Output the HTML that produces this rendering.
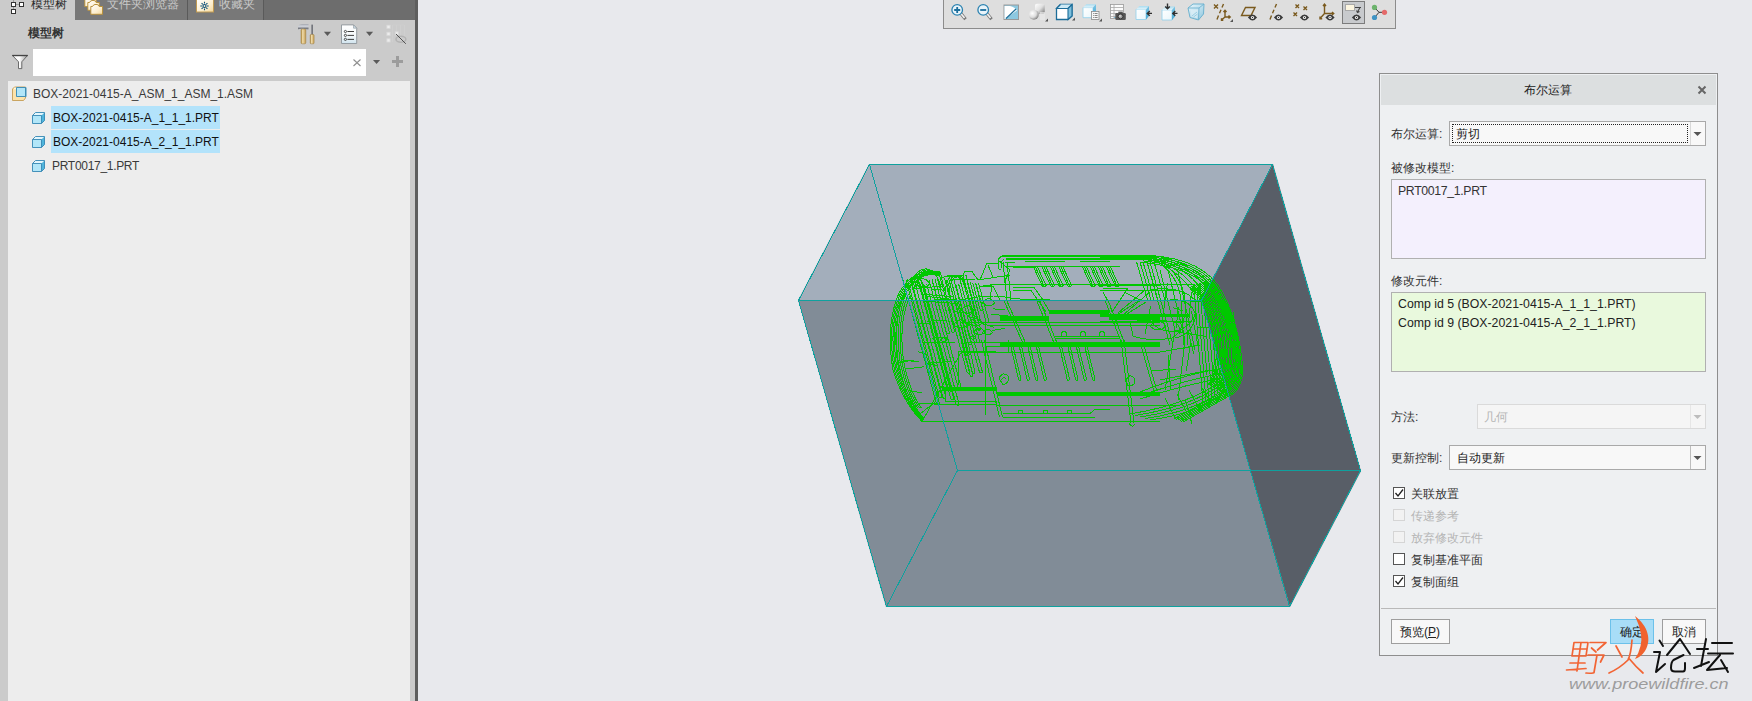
<!DOCTYPE html>
<html><head><meta charset="utf-8">
<style>
*{margin:0;padding:0;box-sizing:border-box}
html,body{width:1752px;height:701px;overflow:hidden;background:#e8e9ed;font-family:"Liberation Sans",sans-serif;font-size:12px;color:#333}
.abs{position:absolute}
.t{position:absolute;white-space:nowrap;line-height:14px}
#panel{left:0;top:0;width:415px;height:701px;background:#cbcbcb}
#tabbar{left:0;top:0;width:415px;height:20px;background:#6d6d6d}
#pbar{left:415px;top:0;width:3px;height:701px;background:#5e5e5e}
#tree{left:8px;top:81px;width:402px;height:620px;background:#ededed}
#search{left:33px;top:49px;width:333px;height:27px;background:#fff}
.hl{position:absolute;background:#b3e3fb}
#toolbar{left:943px;top:-1px;width:453px;height:30px;background:#dedede;border:1px solid #8c8c8c}
#dlg{left:1379px;top:73px;width:339px;height:583px;background:#eef0f2;border:1px solid #8e8e8e}
</style></head>
<body>
<!-- LEFT PANEL -->
<div id="panel" class="abs"></div>
<div id="tabbar" class="abs"></div>
<div class="abs" style="left:0;top:0;width:75px;height:20px;background:#cbcbcb"></div>
<div class="abs" style="left:75px;top:0;width:113px;height:20px;background:#787878;border-right:1px solid #5a5a5a"></div>
<div class="abs" style="left:188px;top:0;width:76px;height:20px;background:#787878;border-right:1px solid #5a5a5a"></div>
<!-- tab icons -->
<svg class="abs" style="left:0;top:0" width="415" height="20">
  <g fill="#fff" stroke="#333" stroke-width="1">
    <rect x="11.5" y="2.5" width="4" height="4"/>
    <rect x="19.5" y="2.5" width="4" height="4"/>
    <rect x="11.5" y="9.5" width="4" height="4"/>
  </g>
  <path d="M16 4.5H19M13.5 7V9M13.5 0V2" stroke="#999" stroke-width="1"/>
  <!-- folders -->
  <defs><linearGradient id="fold" x1="0" y1="0" x2="1" y2="1"><stop offset="0" stop-color="#ffffff"/><stop offset="0.6" stop-color="#fdefcf"/><stop offset="1" stop-color="#f3d79c"/></linearGradient></defs>
  <g stroke="#b8923f" stroke-width="1" fill="url(#fold)">
    <path d="M84.8 -2 H96.2 V6.6 H84.8Z"/>
    <path d="M87.8 2.5 H89.5 Q90.5 0.5 92 0.5 H94 Q95.5 0.5 96.2 2.5 H99.3 V10.3 H87.8Z"/>
    <path d="M90.8 6.5 H92.5 Q93.5 4.5 95 4.5 H97 Q98.5 4.5 99.2 6.5 H102.5 V14.3 H90.8Z"/>
  </g>
  <rect x="196.5" y="-0.5" width="17" height="12.5" fill="url(#fold)" stroke="#c09a52"/>
  <g stroke="#0b4f78" stroke-width="1.1" fill="none"><circle cx="204.5" cy="6" r="1.5"/><path d="M204.5 1.8V3.6M204.5 8.4V10.2M200.3 6H202.1M206.9 6H208.7M201.6 3.1L202.8 4.3M206.2 7.7L207.4 8.9M207.4 3.1L206.2 4.3M202.8 7.7L201.6 8.9"/></g>
</svg>
<div class="t" style="left:31px;top:-3px;font-size:12px;color:#2b2b2b">模型树</div>
<div class="t" style="left:107px;top:-3px;font-size:12px;color:#c9c9c9">文件夹浏览器</div>
<div class="t" style="left:219px;top:-3px;font-size:12px;color:#c9c9c9">收藏夹</div>
<div id="pbar" class="abs"></div>
<div class="t" style="left:28px;top:26px;font-size:12px;font-weight:bold;color:#333">模型树</div>
<!-- header tool icons -->
<svg class="abs" style="left:290px;top:20px" width="125" height="60">
  <defs>
    <linearGradient id="gold" x1="0" y1="0" x2="1" y2="0"><stop offset="0" stop-color="#b08a3e"/><stop offset="0.35" stop-color="#f1dcaa"/><stop offset="1" stop-color="#c19a4f"/></linearGradient>
    <linearGradient id="steel" x1="0" y1="0" x2="0" y2="1"><stop offset="0" stop-color="#9a9ea8"/><stop offset="0.4" stop-color="#d8dbe2"/><stop offset="1" stop-color="#5d6068"/></linearGradient>
    <linearGradient id="docg" x1="0" y1="0" x2="0" y2="1"><stop offset="0" stop-color="#ffffff"/><stop offset="0.6" stop-color="#f4f8fa"/><stop offset="1" stop-color="#cfe3ee"/></linearGradient>
  </defs>
  <path d="M8 6.5 Q9 4.2 12 4.2 H18.5 V9.2 H16.5 Q14.5 8.5 12 8.8 Q9.5 9 8 9.2Z" fill="url(#steel)"/>
  <rect x="11" y="9" width="4.8" height="14.8" rx="1.2" fill="url(#gold)" stroke="#9b7a3a" stroke-width="0.5"/>
  <rect x="21.4" y="4.6" width="1.5" height="10.5" fill="#6a6d75"/>
  <rect x="20.2" y="14.4" width="3.9" height="9.4" rx="1" fill="url(#gold)" stroke="#9b7a3a" stroke-width="0.5"/>
  <path d="M33.9 11.7h7.1l-3.55 4.4z" fill="#5a5a5a"/>
  <path d="M51.5 4.9h12l3.2 3.3v15.3h-15.2z" fill="url(#docg)" stroke="#8d959b" stroke-width="0.9"/>
  <path d="M63.5 4.9v3.3h3.2z" fill="#cfe1ec" stroke="#8d959b" stroke-width="0.6"/>
  <g stroke="#3f3f3f" stroke-width="0.9" fill="none">
    <circle cx="55.4" cy="11.5" r="1.1"/><circle cx="55.4" cy="15.4" r="1.1"/><circle cx="55.4" cy="19.4" r="1.1"/>
    <path d="M57.4 11.5h6.6M57.4 15.4h6.6M57.4 19.4h6.6" stroke-width="1"/>
  </g>
  <path d="M76 11.7h7.1l-3.55 4.4z" fill="#5a5a5a"/>
  <g fill="#ececec" stroke="#d9d9d9" stroke-width="0.8"><rect x="96.9" y="5.2" width="3.2" height="3.2"/><rect x="96.9" y="12.2" width="3.2" height="3.2"/><rect x="96.9" y="18.8" width="3.2" height="3.2"/><rect x="105.3" y="11.8" width="3" height="3"/></g>
  <path d="M102.5 5v17M106.5 5v6M110.5 5v17M114.5 5v17M102.5 5h12" stroke="#d2d2d2" stroke-width="0.6" fill="none"/>
  <ellipse cx="110.9" cy="19.2" rx="4.9" ry="3" fill="none" stroke="#b3b3b3" stroke-width="1.6"/>
  <path d="M106 14 L115.8 23.8" stroke="#444" stroke-width="0.9"/>
</svg>
<div id="search" class="abs"></div>
<svg class="abs" style="left:0;top:45px" width="415" height="36">
  <defs><linearGradient id="fun" x1="0" y1="0" x2="1" y2="0"><stop offset="0" stop-color="#f0f0f0"/><stop offset="0.45" stop-color="#ffffff"/><stop offset="1" stop-color="#9a9a9a"/></linearGradient></defs><path d="M12.3 10.3 H27.7 L21.8 16.8 V23.6 H18.5 V16.8 Z" fill="url(#fun)" stroke="#5c5c5c" stroke-width="0.9"/><path d="M12.3 10.6 H27.7" stroke="#444" stroke-width="1.2"/>
  <path d="M353.5 14.5l7 6.5M360.5 14.5l-7 6.5" stroke="#8e8e8e" stroke-width="1.1"/>
  <path d="M373 15h7.1l-3.55 4z" fill="#5a5a5a"/>
  <path d="M397.5 11v11M392 16.5h11" stroke="#9c9c9c" stroke-width="3"/>
</svg>
<div id="tree" class="abs"></div>
<div class="hl" style="left:51px;top:106px;width:169px;height:23px"></div>
<div class="hl" style="left:51px;top:130px;width:169px;height:23px"></div>
<svg class="abs" style="left:8px;top:81px" width="60" height="100">
  <defs>
    <g id="cube">
      <path d="M0.5 3.5 H9.5 V11.5 H0.5Z" fill="#b2e6f8"/>
      <path d="M0.5 3.5 L3.5 0.5 H12.5 L9.5 3.5Z" fill="#e3f6fd"/>
      <path d="M9.5 3.5 L12.5 0.5 V8.5 L9.5 11.5Z" fill="#4fb5dc"/>
      <path d="M0.5 3.5 L3.5 0.5 H12.5 V8.5 L9.5 11.5 H0.5Z M0.5 3.5 H9.5 V11.5" fill="none" stroke="#3487b3" stroke-width="0.9"/>
    </g>
  </defs>
  <path d="M4.5 8 L6.5 6 H17.5 V17 L15.5 19.5 H4.5Z" fill="#fde3ab" stroke="#c59d55" stroke-width="0.9"/>
  <path d="M6 7.5 H15" stroke="#fff6df" stroke-width="1.5"/>
  <g transform="translate(8,6)">
    <path d="M0.5 0.5 H9.5 V9.5 H0.5Z" fill="#b2e6f8" stroke="#3487b3" stroke-width="0.9"/>
    <path d="M9.5 0.5 H10.5 V9.5 L9.5 10.5Z" fill="#3d8fb8"/>
  </g>
  <use href="#cube" x="24" y="31"/>
  <use href="#cube" x="24" y="55"/>
  <use href="#cube" x="24" y="79"/>
</svg>
<div class="t" style="left:33px;top:87px;color:#3a3a3a">BOX-2021-0415-A_ASM_1_ASM_1.ASM</div>
<div class="t" style="left:53px;top:111px;color:#111">BOX-2021-0415-A_1_1_1.PRT</div>
<div class="t" style="left:53px;top:135px;color:#111">BOX-2021-0415-A_2_1_1.PRT</div>
<div class="t" style="left:52px;top:159px;color:#3a3a3a;letter-spacing:-0.3px">PRT0017_1.PRT</div>
<!-- VIEWPORT -->
<svg class="abs" style="left:0;top:0" width="1752" height="701">
  <!-- box faces -->
  <polygon points="869,164 1273,164 1201,300 798,300" fill="#a3aebb"/>
  <polygon points="798,300 1201,300 1290,607 886,607" fill="#818c97"/>
  <polygon points="1273,164 1361,471 1290,607 1201,300" fill="#585e67"/>
  <g id="wire" fill="none" stroke="#00c800" stroke-width="1" shape-rendering="crispEdges"><path d="M940.0,272.0 Q915.0,266.0 899.0,293.0 Q885.0,325.0 893.0,370.0 Q903.0,402.0 922.0,421.5"/><path d="M940.0,273.0 Q915.8,267.0 900.3,293.8 Q886.4,325.0 894.4,370.0 Q904.3,401.7 922.5,420.7"/><path d="M940.0,273.9 Q916.6,267.9 901.6,294.6 Q887.9,325.0 895.9,370.0 Q905.6,401.4 923.0,419.9"/><path d="M940.0,274.9 Q917.4,268.9 902.8,295.4 Q889.3,325.0 897.3,370.0 Q906.8,401.0 923.4,419.1"/><path d="M940.0,275.8 Q918.2,269.8 904.1,296.2 Q890.8,325.0 898.8,370.0 Q908.1,400.7 923.9,418.3"/><path d="M905.0,290.0 Q893.0,320.0 898.0,360.0 Q904.0,392.0 916.0,408.0"/><path d="M906.8,291.8 Q894.8,320.0 899.8,360.0 Q905.8,392.0 917.8,408.0"/><path d="M908.6,293.6 Q896.6,320.0 901.6,360.0 Q907.6,392.0 919.6,408.0"/><path d="M910.4,295.4 Q898.4,320.0 903.4,360.0 Q909.4,392.0 921.4,408.0"/><path d="M930.0,271.5 L940.0,272.0 L942.0,278.0"/><path d="M942.0,278.0 L949.0,275.0 L963.0,275.0 L965.0,271.5 L972.0,271.5 L978.0,280.0"/><path d="M944.0,276.0 L962.0,277.0"/><path d="M950.0,279.0 L975.0,279.0"/><path d="M910,288 Q915,268 927,269 Q937,271 941,288"/><path d="M912,288 Q917,269 928,270 Q937,271 941,288"/><path d="M914,288 Q919,270 929,271 Q937,271 941,288"/><path d="M916,288 Q921,271 930,272 Q937,271 941,288"/><path d="M945,292 Q947,275 955,275 Q963,276 966,292"/><path d="M947,292 Q949,276 956,276 Q963,276 966,292"/><path d="M949,292 Q951,277 957,277 Q963,276 966,292"/><path d="M902.9,279.6 L936.4,403.5 Q937.9,405.5 939.4,403.5 L905.9,279.6"/><path d="M907.2,279.1 L939.0,396.7 Q940.5,398.7 942.0,396.7 L910.2,279.1"/><path d="M911.0,279.1 L943.0,397.6 Q944.5,399.6 946.0,397.6 L914.0,279.1"/><path d="M916.5,274.9 L947.8,391.1 Q949.3,393.1 950.8,391.1 L919.5,274.9"/><path d="M919.4,282.1 L950.9,398.9 Q952.4,400.9 953.9,398.9 L922.4,282.1"/><path d="M923.6,283.8 L956.1,404.3 Q957.6,406.3 959.1,404.3 L926.6,283.8"/><path d="M929.1,280.2 L958.3,388.1 Q959.8,390.1 961.3,388.1 L932.1,280.2"/><path d="M932.1,279.3 L946.6,333.0 Q948.1,335.0 949.6,333.0 L935.1,279.3"/><path d="M936.8,276.4 L951.7,331.5 Q953.2,333.5 954.7,331.5 L939.8,276.4"/><path d="M941.6,278.4 L966.9,372.1 Q968.4,374.1 969.9,372.1 L944.6,278.4"/><path d="M946.0,280.4 L966.2,355.0 Q967.7,357.0 969.2,355.0 L949.0,280.4"/><path d="M950.6,278.6 L968.3,343.9 Q969.8,345.9 971.3,343.9 L953.6,278.6"/><path d="M955.6,284.0 L979.4,372.0 Q980.9,374.0 982.4,372.0 L958.6,284.0"/><path d="M959.3,277.2 L976.7,341.5 Q978.2,343.5 979.7,341.5 L962.3,277.2"/><path d="M962.8,274.7 L977.5,329.2 Q979.0,331.2 980.5,329.2 L965.8,274.7"/><path d="M967.3,282.5 L977.3,319.7 Q978.8,321.7 980.3,319.7 L970.3,282.5"/><path d="M972.7,282.5 L980.2,310.0 Q981.7,312.0 983.2,310.0 L975.7,282.5"/><path d="M975.5,283.1 L986.0,321.7 Q987.5,323.7 989.0,321.7 L978.5,283.1"/><path d="M955,300 L972,372 Q973.5,375 975,372 L958,300"/><path d="M993.2,308.8 L1005.1,309.9"/><path d="M975.1,301.2 L987.2,299.8"/><path d="M991.8,330.5 L1004.7,328.5"/><path d="M914.1,288.6 L944.0,286.0"/><path d="M955.3,311.8 L970.1,313.7"/><path d="M916.8,323.6 L929.7,323.0"/><path d="M924.2,301.2 L958.4,303.6"/><path d="M932.4,338.1 L947.6,337.2"/><path d="M981.9,323.5 L994.4,327.4"/><path d="M924.2,300.5 L953.5,299.1"/><path d="M931.7,289.4 L943.9,290.1"/><path d="M926.9,321.1 L946.2,320.7"/><path d="M991.3,314.0 L1015.7,317.0"/><path d="M921.5,294.2 L954.2,296.8"/><path d="M927.5,296.4 L955.9,299.9"/><path d="M922.7,342.0 L954.7,342.8"/><path d="M917.8,351.7 L926.5,354.5"/><path d="M909.2,390.8 L921.6,392.7"/><path d="M926.0,364.1 L937.0,365.4"/><path d="M901.2,359.8 L918.7,362.0"/><path d="M926.9,363.2 L950.5,361.4"/><path d="M898.8,362.5 L914.4,359.9"/><path d="M906.3,369.0 L924.0,366.8"/><path d="M915.0,402.9 L939.7,403.9"/><path d="M968.1,316.3 Q971.8,311.1 975.5,316.3 Q971.8,319.3 968.1,316.3"/><path d="M915.1,284.0 Q922.6,273.4 930.2,284.0 Q922.6,290.1 915.1,284.0"/><path d="M969.5,337.9 Q972.6,333.5 975.7,337.9 Q972.6,340.4 969.5,337.9"/><path d="M961.1,310.5 Q967.7,301.2 974.4,310.5 Q967.7,315.8 961.1,310.5"/><path d="M940.5,340.0 Q943.9,335.2 947.3,340.0 Q943.9,342.7 940.5,340.0"/><path d="M953.5,325.0 Q961.0,314.5 968.5,325.0 Q961.0,331.0 953.5,325.0"/><path d="M968.3,323.1 Q975.3,313.4 982.2,323.1 Q975.3,328.7 968.3,323.1"/><path d="M982.2,303.1 Q988.6,294.1 995.1,303.1 Q988.6,308.2 982.2,303.1"/><path d="M982.5,332.7 Q987.6,325.5 992.6,332.7 Q987.6,336.7 982.5,332.7"/><path d="M973.4,332.2 Q979.3,324.0 985.2,332.2 Q979.3,336.9 973.4,332.2"/><path d="M958.0,351.0 L996.0,351.0"/><path d="M958.0,351.0 L958.0,385.0"/><path d="M980.0,280.0 L987.0,263.0 L998.0,263.0"/><path d="M988.0,265.0 L993.0,277.0"/><path d="M978.0,280.0 L1010.0,275.0"/><path d="M983.0,286.0 L992.0,285.0 L990.0,300.0"/><path d="M980.0,286.0 L993.0,286.0 L1000.0,300.0"/><path d="M1002.0,255.5 L1150.0,255.5" stroke-width="2"/><path d="M1006.0,258.7 L1150.0,258.7" stroke-width="2"/><path d="M1002,256 Q998,258 998,262 L998,268 Q999,270 1001,270"/><path d="M1004,259 Q1001,261 1001,264 L1001,268"/><path d="M1005.0,262.0 L1015.0,262.0"/><path d="M1005.0,266.0 L1015.0,266.0"/><path d="M1025.0,261.9 L1065.0,261.9"/><path d="M1080.0,261.9 L1110.0,261.9"/><path d="M1013.0,266.0 L1120.0,266.0"/><path d="M1013.0,267.0 L1035.0,267.0"/><path d="M998.0,260.0 L1010.0,270.0 L1004.0,283.0"/><path d="M1003.0,262.0 L1007.0,300.0"/><path d="M1007.0,262.0 L1011.0,300.0"/><path d="M1033.0,266 L1042.0,285.5 Q1044.0,288 1046.0,285.5 L1037.0,266"/><path d="M1035.0,266.0 L1044.0,286.0"/><path d="M1041.5,266 L1050.5,285.5 Q1052.5,288 1054.5,285.5 L1045.5,266"/><path d="M1043.5,266.0 L1052.5,286.0"/><path d="M1050.0,266 L1059.0,285.5 Q1061.0,288 1063.0,285.5 L1054.0,266"/><path d="M1052.0,266.0 L1061.0,286.0"/><path d="M1058.5,266 L1067.5,285.5 Q1069.5,288 1071.5,285.5 L1062.5,266"/><path d="M1060.5,266.0 L1069.5,286.0"/><path d="M1082.0,266 L1091.0,285.5 Q1093.0,288 1095.0,285.5 L1086.0,266"/><path d="M1084.0,266.0 L1093.0,286.0"/><path d="M1090.0,266 L1099.0,285.5 Q1101.0,288 1103.0,285.5 L1094.0,266"/><path d="M1092.0,266.0 L1101.0,286.0"/><path d="M1098.0,266 L1107.0,285.5 Q1109.0,288 1111.0,285.5 L1102.0,266"/><path d="M1100.0,266.0 L1109.0,286.0"/><path d="M1106.0,266 L1115.0,285.5 Q1117.0,288 1119.0,285.5 L1110.0,266"/><path d="M1108.0,266.0 L1117.0,286.0"/><path d="M990.0,284.2 L1195.0,284.2"/><path d="M1013.0,287.4 L1034.0,287.4 L1043.0,300.0 L1049.0,311.0"/><path d="M1013.0,290.5 L1031.0,290.5 L1040.0,303.0 L1046.0,312.0"/><path d="M1103.0,288.0 L1128.0,288.0"/><path d="M1103.0,292.0 L1110.0,305.0 L1112.0,312.0"/><path d="M1128.0,288.0 L1112.0,312.0"/><path d="M1124.0,292.0 L1140.0,300.0"/><path d="M1049.0,312.0 L1109.0,312.0" stroke-width="4"/><path d="M1000.0,318.0 L1049.0,318.0" stroke-width="5"/><path d="M1109.0,317.0 L1160.0,317.0" stroke-width="5"/><path d="M960.0,322.0 L1160.0,322.0"/><path d="M990.0,325.0 L1160.0,325.0"/><path d="M1055.0,336.0 L1120.0,336.0"/><path d="M1055.0,338.5 L1120.0,338.5"/><path d="M1061.5,336 L1061.5,333 Q1064,329 1066.5,333 L1066.5,336"/><path d="M1080.5,336 L1080.5,333 Q1083,329 1085.5,333 L1085.5,336"/><path d="M1099.5,336 L1099.5,333 Q1102,329 1104.5,333 L1104.5,336"/><path d="M966.0,342.6 L1160.0,342.6"/><path d="M1000.0,344.0 L1160.0,344.0" stroke-width="3"/><path d="M985.0,346.8 L1160.0,346.8"/><path d="M961.0,352.8 L1160.0,352.8"/><path d="M1008.0,340.0 L1008.0,352.0"/><path d="M1003.7,300.0 L1022.8,343.0"/><path d="M1006.5,300.0 L1025.6,343.0"/><path d="M1036.5,300.0 L1054.0,343.0"/><path d="M1039.5,300.0 L1057.0,343.0"/><path d="M1105.0,300.0 L1121.5,343.0"/><path d="M1108.0,300.0 L1124.5,343.0"/><path d="M1109.0,320.0 L1140.0,300.0"/><path d="M1114.0,322.0 L1146.0,302.0"/><path d="M1140,320 Q1160,312 1190,316"/><path d="M960,300 Q990,294 1005,297 Q1025,301 1050,299"/><path d="M1010.0,343 L1018.5,379 Q1019.5,382 1021.0,379 L1012.2,343"/><path d="M1018.5,343 L1027.0,379 Q1028.0,382 1029.5,379 L1020.7,343"/><path d="M1027.0,343 L1035.5,379 Q1036.5,382 1038.0,379 L1029.2,343"/><path d="M1035.5,343 L1044.0,379 Q1045.0,382 1046.5,379 L1037.7,343"/><path d="M1058.6,343 L1067.1,379 Q1068.1,382 1069.6,379 L1060.8,343"/><path d="M1067.0,343 L1075.5,379 Q1076.5,382 1078.0,379 L1069.2,343"/><path d="M1075.5,343 L1084.0,379 Q1085.0,382 1086.5,379 L1077.7,343"/><path d="M1084.0,343 L1092.5,379 Q1093.5,382 1095.0,379 L1086.2,343"/><path d="M961,340 L970,375 Q971.5,378 973,375 L964,340"/><path d="M981.4,340.0 L999.4,417.0"/><path d="M984.4,340.0 L1002.4,417.0"/><path d="M999,378 Q1003,371 1008,376 Q1010,383 1003,385 Z"/><path d="M1001,380 Q1004,376 1006,379"/><path d="M941.6,388.8 L997.0,388.8" stroke-width="4"/><path d="M997.0,393.8 L1160.0,393.8" stroke-width="4"/><path d="M945.0,389.0 L945.0,402.0"/><path d="M945.0,401.6 L997.0,401.6"/><path d="M934.0,404.0 L997.0,404.0"/><path d="M997.0,405.7 L1180.0,405.7"/><path d="M1003.0,413.6 L1090.0,413.6"/><path d="M1018.0,413.6 L1018.0,410.0 L1022.0,410.0 L1022.0,413.6"/><path d="M1043.0,413.6 L1043.0,410.0 L1047.0,410.0 L1047.0,413.6"/><path d="M1067.0,413.6 L1067.0,410.0 L1071.0,410.0 L1071.0,413.6"/><path d="M1003.0,417.8 L1095.0,417.8"/><path d="M1090.0,413.6 L1095.0,409.0 L1110.0,409.0"/><path d="M922.0,421.5 L1160.0,421.5"/><path d="M922.0,421.5 L960.9,352.8"/><path d="M920.0,414.0 L935.0,402.0"/><path d="M1121.0,340.0 L1131.0,423.0"/><path d="M1124.0,340.0 L1134.0,423.0"/><path d="M1126,380 Q1130,372 1135,379 Q1136,386 1128,386 Z"/><path d="M1129,423 Q1132,429 1135,424"/><path d="M1140.0,342.0 L1154.0,391.0"/><path d="M1143.0,342.0 L1157.0,391.0"/><path d="M1150.0,255.5 Q1205.0,259.0 1222.0,292.0 Q1240.0,325.0 1243.0,372.0 Q1240.0,392.0 1229.0,396.0 L1183.0,422.0"/><path d="M1148.3,256.9 Q1203.3,260.7 1220.3,292.5 Q1238.6,325.0 1241.6,372.0 Q1238.8,391.3 1227.6,395.3 L1181.3,421.3"/><path d="M1146.6,258.2 Q1201.6,262.4 1218.6,293.0 Q1237.3,325.0 1240.3,372.0 Q1237.6,390.6 1226.3,394.6 L1179.6,420.6"/><path d="M1144.9,259.6 Q1199.9,264.1 1216.9,293.5 Q1235.9,325.0 1238.9,372.0 Q1236.4,390.0 1224.9,394.0 L1177.9,420.0"/><path d="M1143.2,260.9 Q1198.2,265.8 1215.2,294.0 Q1234.6,325.0 1237.6,372.0 Q1235.2,389.3 1223.6,393.3 L1176.2,419.3"/><path d="M1141.5,262.3 Q1196.5,267.5 1213.5,294.6 Q1233.2,325.0 1236.2,372.0 Q1234.0,388.6 1222.2,392.6 L1174.5,418.6"/><path d="M1209.0,279.0 Q1237.0,310.0 1239.0,350.0 Q1239.0,378.0 1224.0,393.0"/><path d="M1207.7,279.5 Q1235.4,310.0 1237.4,350.0 Q1237.4,378.0 1222.9,392.5"/><path d="M1206.5,280.1 Q1233.8,310.0 1235.8,350.0 Q1235.8,378.0 1221.8,391.9"/><path d="M1205.2,280.6 Q1232.1,310.0 1234.1,350.0 Q1234.1,378.0 1220.8,391.4"/><path d="M1204.0,281.2 Q1230.5,310.0 1232.5,350.0 Q1232.5,378.0 1219.7,390.8"/><path d="M1202.7,281.7 Q1228.9,310.0 1230.9,350.0 Q1230.9,378.0 1218.6,390.3"/><path d="M1201.4,282.2 Q1227.3,310.0 1229.3,350.0 Q1229.3,378.0 1217.5,389.8"/><path d="M1200.2,282.8 Q1225.7,310.0 1227.7,350.0 Q1227.7,378.0 1216.4,389.2"/><path d="M1198.9,283.3 Q1224.0,310.0 1226.0,350.0 Q1226.0,378.0 1215.4,388.7"/><path d="M1197.7,283.9 Q1222.4,310.0 1224.4,350.0 Q1224.4,378.0 1214.3,388.1"/><path d="M1196.4,284.4 Q1220.8,310.0 1222.8,350.0 Q1222.8,378.0 1213.2,387.6"/><path d="M1195.1,284.9 Q1219.2,310.0 1221.2,350.0 Q1221.2,378.0 1212.1,387.1"/><path d="M1193.9,285.5 Q1217.6,310.0 1219.6,350.0 Q1219.6,378.0 1211.0,386.5"/><path d="M1192.6,286.0 Q1215.9,310.0 1217.9,350.0 Q1217.9,378.0 1210.0,386.0"/><path d="M1191.4,286.6 Q1214.3,310.0 1216.3,350.0 Q1216.3,378.0 1208.9,385.4"/><path d="M1190.1,287.1 Q1212.7,310.0 1214.7,350.0 Q1214.7,378.0 1207.8,384.9"/><path d="M1194.0,286.0 L1203.0,404.0"/><path d="M1197.0,288.0 L1206.0,401.8"/><path d="M1200.0,290.0 L1209.0,399.6"/><path d="M1203.0,292.0 L1212.0,397.4"/><path d="M1206.0,294.0 L1215.0,395.2"/><path d="M1209.0,296.0 L1218.0,393.0"/><path d="M1212.0,298.0 L1221.0,390.8"/><path d="M1215.0,300.0 L1224.0,388.6"/><path d="M1218.0,302.0 L1227.0,386.4"/><path d="M1221.0,304.0 L1230.0,384.2"/><path d="M1224.0,306.0 L1233.0,382.0"/><path d="M1227.0,308.0 L1236.0,379.8"/><path d="M1230.0,310.0 L1239.0,377.6"/><path d="M1233.0,312.0 L1242.0,375.4"/><path d="M1150.0,420.0 Q1212.0,412.0 1238.0,378.0"/><path d="M1145.0,418.5 Q1209.5,409.5 1236.0,376.8"/><path d="M1140.0,417.0 Q1207.0,407.0 1234.0,375.5"/><path d="M1135.0,415.5 Q1204.5,404.5 1232.0,374.2"/><path d="M1130.0,414.0 Q1202.0,402.0 1230.0,373.0"/><path d="M1175.0,418.0 L1165.0,398.0"/><path d="M1187.0,413.0 L1177.0,394.0"/><path d="M1199.0,408.0 L1189.0,390.0"/><path d="M1211.0,403.0 L1201.0,386.0"/><path d="M1130,322 Q1150,318 1175,322 Q1185,330 1172,338 Q1150,342 1133,336 Z"/><path d="M985.0,322.0 L985.0,415.0"/><path d="M1140,392 Q1190,372 1235,366.5"/><path d="M1140,396 Q1190,378 1232,372"/><path d="M1140,399 Q1190,383 1230,377"/><path d="M1150,290 Q1180,285 1195,300 Q1200,320 1180,330 Q1160,335 1150,320"/><path d="M1160.0,270.0 L1175.0,330.0 L1165.0,390.0"/><path d="M1168.0,270.0 L1185.0,340.0 L1178.0,400.0"/><path d="M1178.0,272.0 L1195.0,350.0"/><path d="M1160.0,352.0 L1200.0,345.0"/><path d="M1160.0,380.0 L1210.0,370.0"/><path d="M1184.4,316.6 L1179.4,333.6"/><path d="M1185.2,399.1 L1191.9,423.8"/><path d="M1190.4,343.4 L1186.3,371.4"/><path d="M1178.3,306.9 L1176.3,327.6"/><path d="M1188.4,332.1 L1193.6,353.5"/><path d="M1150.6,305.6 L1145.1,333.6"/><path d="M1191.5,311.2 L1198.5,348.5"/><path d="M1168.0,354.9 L1170.7,390.0"/><path d="M1191.5,292.0 L1188.7,321.6"/><path d="M1167.4,283.4 L1162.9,316.2"/><path d="M1197.5,327.7 L1211.7,327.2"/><path d="M1163.8,321.4 L1184.1,322.7"/><path d="M1174.7,331.5 L1205.7,336.4"/><path d="M1172.6,307.5 L1183.4,311.2"/><path d="M1152.1,370.9 L1176.3,369.0"/><path d="M1189.6,301.9 L1203.0,301.5"/><path d="M1100,255.5 L1154.0,255.5 Q1190.0,262.0 1208.0,282.5"/><path d="M1100,256.4 L1152.9,256.4 Q1187.8,264.2 1204.7,285.8"/><path d="M1100,257.3 L1151.8,257.3 Q1185.6,266.4 1201.4,289.1"/><path d="M1100,258.1 L1150.7,258.1 Q1183.4,268.6 1198.1,292.4"/><path d="M1100,259.0 L1149.6,259.0 Q1181.2,270.8 1194.8,295.7"/><path d="M1136.6,262.0 L1147.6,300.0"/><path d="M1140.0,262.0 L1151.0,300.0"/><path d="M1143.0,262.0 L1154.0,300.0"/><path d="M1147.0,262.0 L1158.0,300.0"/><path d="M1154.0,262.0 L1165.0,300.0"/><path d="M1147.0,262.0 L1170.0,345.0"/><path d="M1150.0,262.0 L1173.0,345.0"/><path d="M1158,262 Q1178,275 1181,300 L1184,345"/><path d="M1162,262 Q1182,276 1185,300 L1188,345"/><path d="M1100.0,285.2 L1160.0,285.2"/><path d="M1100.0,290.6 L1180.0,290.6"/><path d="M1100.0,315.7 L1190.0,315.7" stroke-width="3"/><path d="M1100.0,321.8 L1190.0,321.8"/><path d="M1118.0,313.0 L1145.0,290.0"/><path d="M1122.0,316.0 L1150.0,292.0"/><path d="M1150,326 Q1158,316 1166,326 Q1158,334 1150,326"/><path d="M1170,300 Q1190,298 1196,315 Q1192,335 1175,338"/></g>
  <g stroke="#0fa19e" stroke-width="1" fill="none" shape-rendering="crispEdges">
    <path d="M869.5,164.5 L1272.5,164.5 L1360.5,470.5 L1289.5,606.5 L886.5,606.5 L798.5,300.5 Z"/>
    <path d="M798.5,300.5 L1201.5,300.5 L1289.5,606.5 M1201.5,300.5 L1272.5,164.5"/>
    <path d="M869.5,164.5 L957.5,470.5 L1360.5,470.5 M957.5,470.5 L886.5,606.5"/>
  </g>

</svg>
<div id="toolbar" class="abs"></div>
<svg class="abs" style="left:0;top:0" width="1752" height="40" id="tbicons">
  <defs>
    <linearGradient id="gb" x1="0" y1="0" x2="1" y2="1"><stop offset="0" stop-color="#ffffff"/><stop offset="1" stop-color="#dff1f9"/></linearGradient>
    <g id="eye"><path d="M-4.6 0 Q-2.3 -2.9 0 -2.9 Q2.3 -2.9 4.6 0 Q2.3 2.9 0 2.9 Q-2.3 2.9 -4.6 0Z" fill="#3a3a3a"/><circle r="1.6" fill="#fff"/><circle r="0.7" fill="#3a3a3a"/></g>
    <path id="tri" d="M0 0 L3 -3 V0 Z" fill="#555"/>
  </defs>
  <rect x="1342.5" y="1.5" width="22" height="22" fill="#c8cacd" stroke="#7c7c7c"/>
  <!-- 1 zoom in -->
  <path d="M960.5 13 L964.5 18" stroke="#7a7a7a" stroke-width="3.2" stroke-linecap="square"/>
  <path d="M960.5 13 L964.5 18" stroke="#f2f2f2" stroke-width="1.6"/>
  <circle cx="957.2" cy="9.9" r="5.3" fill="#e9f4fa" stroke="#2b82b0" stroke-width="1.3"/>
  <path d="M957.2 7v6M954.2 10h6" stroke="#1b6e9c" stroke-width="1.8"/>
  <!-- 2 zoom out -->
  <path d="M986.5 13 L990.5 18" stroke="#7a7a7a" stroke-width="3.2" stroke-linecap="square"/>
  <path d="M986.5 13 L990.5 18" stroke="#f2f2f2" stroke-width="1.6"/>
  <circle cx="983.2" cy="9.9" r="5.3" fill="#e9f4fa" stroke="#2b82b0" stroke-width="1.3"/>
  <path d="M980.2 10h6" stroke="#1b6e9c" stroke-width="1.8"/>
  <!-- 3 refit -->
  <rect x="1004" y="5" width="14.5" height="14.5" fill="#8cc8e0" stroke="#9a9a9a"/>
  <path d="M1004.5 6 H1010 Q1015 7 1017 10.5 L1005 19 H1004.5Z" fill="#fff"/>
  <path d="M1006 18.5 L1016 9" stroke="#1f6f99" stroke-width="1.2"/>
  <!-- 4 shading -->
  <defs>
    <linearGradient id="shc" x1="0" y1="0" x2="1" y2="1"><stop offset="0" stop-color="#ffffff"/><stop offset="0.5" stop-color="#e0e0e0"/><stop offset="1" stop-color="#6e6e6e"/></linearGradient>
    <radialGradient id="shs" cx="0.35" cy="0.35" r="0.75"><stop offset="0" stop-color="#ffffff"/><stop offset="0.55" stop-color="#dcdcdc"/><stop offset="1" stop-color="#727272"/></radialGradient>
  </defs>
  <path d="M1035 5.5 Q1035 3.7 1037 3.7 H1043 Q1044.7 3.7 1044.7 5.5 V12 Q1044.7 14 1043 14 H1037 Q1035 14 1035 12Z" fill="url(#shc)"/>
  <rect x="1040" y="12" width="5" height="8" fill="#e9e9e9" opacity="0.7"/>
  <circle cx="1033.8" cy="14.8" r="4.9" fill="url(#shs)"/>
  <use href="#tri" x="1045" y="21.5"/>
  <!-- 5 cube -->
  <path d="M1056.5 8.5 L1060.5 4.5 H1072 V16 L1068 19.5 H1056.5Z" fill="#fff" stroke="#1d6d99" stroke-width="1.3"/>
  <path d="M1060.5 4.5 L1056.5 8.5 H1068 L1072 4.5" fill="#cde9f5" stroke="#1d6d99" stroke-width="1.1"/>
  <path d="M1068 8.5 L1072 4.5 V16 L1068 19.5Z" fill="#7ebfdc" stroke="#1d6d99" stroke-width="1.1"/>
  <use href="#tri" x="1072" y="20.5"/>
  <!-- 6 named views -->
  <defs>
    <linearGradient id="ctop" x1="0" y1="0" x2="0" y2="1"><stop offset="0" stop-color="#a9dcf0"/><stop offset="1" stop-color="#e4f5fc"/></linearGradient>
    <linearGradient id="cfront" x1="0" y1="0" x2="1" y2="1"><stop offset="0" stop-color="#ffffff"/><stop offset="1" stop-color="#e9f6fb"/></linearGradient>
    <linearGradient id="cright" x1="0" y1="0" x2="0" y2="1"><stop offset="0" stop-color="#7cc6e6"/><stop offset="1" stop-color="#4aa8d4"/></linearGradient>
    <g id="bcube">
      <path d="M0 3.4 H10 V13.5 H0Z" fill="url(#cfront)" stroke="#8fd0ec" stroke-width="0.8"/>
      <path d="M0 3.4 L3.4 0 H13 L10 3.4Z" fill="url(#ctop)"/>
      <path d="M10 3.4 L13 0 V10 L10 13.5Z" fill="url(#cright)"/>
    </g>
  </defs>
  <use href="#bcube" x="1083" y="4.2" transform="translate(0,0)"/>
  <rect x="1091.5" y="11.5" width="7.5" height="8" fill="#f7f7f7" stroke="#8a8a8a" stroke-width="0.8"/>
  <g stroke="#555" stroke-width="0.7"><path d="M1093 13.5h.8M1094.6 13.5h3M1093 15.5h.8M1094.6 15.5h3M1093 17.5h.8M1094.6 17.5h3"/></g>
  <use href="#tri" x="1099" y="21.5"/>
  <!-- 7 table camera -->
  <rect x="1110.5" y="4.5" width="13" height="14" fill="#fbfbfb" stroke="#9a9a9a" stroke-width="0.8"/>
  <path d="M1110.5 7.5h13M1110.5 10.5h13M1110.5 13.5h6M1110.5 16.5h5M1114 4.5v14" stroke="#a8a8a8" stroke-width="0.8"/>
  <path d="M1114 17.5h4" stroke="#7cc0e0" stroke-width="1"/>
  <rect x="1115.3" y="13" width="10.5" height="7" rx="1.2" fill="#555"/>
  <rect x="1118.3" y="11.6" width="4.5" height="2" fill="#555"/>
  <circle cx="1120.5" cy="16.4" r="2.5" fill="#a0a0a0" stroke="#2e2e2e" stroke-width="0.9"/>
  <circle cx="1120" cy="15.9" r="0.9" fill="#dcdcdc"/>
  <!-- 8 cube arrow -->
  <use href="#bcube" x="1136" y="6"/>
  <path d="M1152 13.4 H1147.3 M1149.8 11.1 L1147.3 13.4 L1149.8 15.7" stroke="#2f2f2f" stroke-width="1.4" fill="none"/>
  <!-- 9 cube two arrows -->
  <use href="#bcube" x="1162" y="6.5"/>
  <path d="M1167.5 3.5 V8.8 M1165.2 6.5 L1167.5 8.8 L1169.8 6.5" stroke="#2f2f2f" stroke-width="1.4" fill="none"/>
  <path d="M1177.5 13.4 H1172.8 M1175.3 11.1 L1172.8 13.4 L1175.3 15.7" stroke="#2f2f2f" stroke-width="1.4" fill="none"/>
  <!-- 10 glass cube -->
  <defs><linearGradient id="glass" x1="0" y1="0" x2="1" y2="1"><stop offset="0" stop-color="#eaf6fb"/><stop offset="0.5" stop-color="#bfe0ee"/><stop offset="1" stop-color="#8cc6de"/></linearGradient></defs>
  <path d="M1188 8 L1193 4 H1204 L1203.5 14 L1198.5 20 L1190 17.5Z" fill="url(#glass)" stroke="#6fb3d0" stroke-width="1"/>
  <path d="M1188 8 H1199 L1204 4 M1199 8 L1198.5 20" stroke="#6fb3d0" stroke-width="0.9" fill="none"/>
  <path d="M1190.5 9.5 L1198 9.5 L1197.5 18.5 L1191.5 16.5Z" fill="#d9eef6" opacity="0.8"/>
  <path d="M1192 16 L1197 12 M1193.5 17 L1197.5 14" stroke="#8cc6de" stroke-width="0.8"/>
  <!-- 11 datum display -->
  <g stroke="#7a5a1e" stroke-width="1.4" fill="none">
    <path d="M1214 4.5 L1218 8.5 M1218 4.5 L1214 8.5"/>
    <path d="M1223.5 4 L1222 7.5 M1221 9.8 L1219.5 13.3 M1218.5 15.6 L1217 19.5"/>
    <path d="M1225 17 V10.5 M1223.5 12 L1225 10.3 L1226.5 12 M1225 17 H1230 M1228.5 15.5 L1230.2 17 L1228.5 18.5 M1225 17 L1221.5 20 M1221.5 18.3 V20.2 H1223.3"/>
  </g>
  <use href="#tri" x="1230" y="22"/>
  <!-- 12 plane eye -->
  <path d="M1241.5 15.5 L1245.5 7.5 H1255 L1251 15.5Z" fill="none" stroke="#7a5a1e" stroke-width="1.4"/>
  <use href="#eye" x="1252.5" y="17.5"/>
  <!-- 13 axis eye -->
  <path d="M1276.5 4 L1275 7.5 M1274 9.8 L1272.5 13.3 M1271.5 15.6 L1270 19.5" stroke="#7a5a1e" stroke-width="1.4"/>
  <use href="#eye" x="1278.5" y="17.5"/>
  <!-- 14 points eye -->
  <g stroke="#7a5a1e" stroke-width="1.4" fill="none">
    <path d="M1295.5 4.5 L1299 8 M1299 4.5 L1295.5 8"/>
    <path d="M1303.5 6.5 L1307 10 M1307 6.5 L1303.5 10"/>
    <path d="M1293.5 12.5 L1297 16 M1297 12.5 L1293.5 16"/>
  </g>
  <use href="#eye" x="1304.5" y="17.5"/>
  <!-- 15 csys eye -->
  <g stroke="#7a5a1e" stroke-width="1.4" fill="none">
    <path d="M1324.5 13.5 V4.5 M1323 6 L1324.5 4.2 L1326 6 M1324.5 13.5 H1333.5 M1332 12 L1333.7 13.5 L1332 15 M1324.5 13.5 L1320 18.5 M1320 16.5 V18.8 H1322.2"/>
  </g>
  <use href="#eye" x="1330" y="17.5"/>
  <!-- 16 annotations -->
  <rect x="1345.5" y="4.5" width="9" height="6" fill="#fdf6e0" stroke="#a8a8a8"/>
  <path d="M1355 7.5 H1361 M1360 7.5 L1357.5 12 M1356.5 10.5 L1357.5 12.5 L1359.5 11.5" stroke="#444" stroke-width="1.1" fill="none"/>
  <use href="#eye" x="1356.5" y="17.5"/>
  <!-- 17 spin center -->
  <path d="M1374.5 7.4 L1379 12.3 H1384.5 M1379 12.3 L1374.5 17.5" stroke="#333" stroke-width="1" fill="none"/>
  <circle cx="1374.5" cy="7.4" r="2.6" fill="#6cb36c"/>
  <circle cx="1384.5" cy="12.3" r="2.6" fill="#e46a6a"/>
  <circle cx="1374.5" cy="17.5" r="2.6" fill="#3f94c4"/>
</svg>
<div id="dlg" class="abs"></div>
<div class="abs" style="left:1381px;top:75px;width:335px;height:30px;background:#dcdfe0"></div>
<div class="t" style="left:1524px;top:83px;color:#222">布尔运算</div>
<svg class="abs" style="left:1695px;top:83px" width="16" height="16"><path d="M3.5 3.5 L10.5 10.5 M10.5 3.5 L3.5 10.5" stroke="#666" stroke-width="2"/></svg>
<div class="t" style="left:1391px;top:127px;color:#333">布尔运算:</div>
<div class="abs" style="left:1449px;top:121px;width:257px;height:25px;background:#f8f8f8;border:1px solid #a9a9a9"></div>
<div class="abs" style="left:1452px;top:124px;width:236px;height:19px;border:1px dotted #222"></div>
<div class="abs" style="left:1690px;top:122px;width:1px;height:23px;background:#d8d8d8"></div>
<div class="t" style="left:1456px;top:127px;color:#222">剪切</div>
<div class="t" style="left:1391px;top:161px;color:#333">被修改模型:</div>
<div class="abs" style="left:1391px;top:179px;width:315px;height:80px;background:#f4f0fd;border:1px solid #b0b0b0"></div>
<div class="t" style="left:1398px;top:184px;color:#333;font-size:12.3px;letter-spacing:-0.35px">PRT0017_1.PRT</div>
<div class="t" style="left:1391px;top:274px;color:#333">修改元件:</div>
<div class="abs" style="left:1391px;top:292px;width:315px;height:80px;background:#e9f9dd;border:1px solid #b0b0b0"></div>
<div class="t" style="left:1398px;top:297px;color:#222;font-size:12.3px">Comp id 5 (BOX-2021-0415-A_1_1_1.PRT)</div>
<div class="t" style="left:1398px;top:316px;color:#222;font-size:12.3px">Comp id 9 (BOX-2021-0415-A_2_1_1.PRT)</div>
<div class="t" style="left:1391px;top:410px;color:#333">方法:</div>
<div class="abs" style="left:1477px;top:404px;width:229px;height:25px;background:#f5f5f5;border:1px solid #dadada"></div>
<div class="abs" style="left:1690px;top:405px;width:1px;height:23px;background:#e6e6e6"></div>
<div class="t" style="left:1484px;top:410px;color:#b5b5b5">几何</div>
<div class="t" style="left:1391px;top:451px;color:#333">更新控制:</div>
<div class="abs" style="left:1449px;top:445px;width:257px;height:25px;background:#f8f8f8;border:1px solid #a9a9a9"></div>
<div class="abs" style="left:1690px;top:446px;width:1px;height:23px;background:#bdbdbd"></div>
<div class="t" style="left:1457px;top:451px;color:#222">自动更新</div>
<svg class="abs" style="left:1380px;top:110px" width="338" height="480">
  <path d="M313.5 22h8l-4 4z" fill="#555"/>
  <path d="M313.5 305h8l-4 4z" fill="#bdbdbd"/>
  <path d="M313.5 346h8l-4 4z" fill="#555"/>
  <g fill="#fff" stroke="#555">
    <rect x="13.5" y="377.5" width="11" height="11"/>
    <rect x="13.5" y="443.5" width="11" height="11"/>
    <rect x="13.5" y="465.5" width="11" height="11"/>
  </g>
  <g fill="#f2f2f2" stroke="#d5d5d5">
    <rect x="13.5" y="399.5" width="11" height="11"/>
    <rect x="13.5" y="421.5" width="11" height="11"/>
  </g>
  <path d="M15.5 383 L18 386 L23 379.5 M15.5 471 L18 474 L23 467.5" stroke="#222" stroke-width="1.3" fill="none"/>
</svg>
<div class="t" style="left:1411px;top:487px;color:#333">关联放置</div>
<div class="t" style="left:1411px;top:509px;color:#b5b5b5">传递参考</div>
<div class="t" style="left:1411px;top:531px;color:#b5b5b5">放弃修改元件</div>
<div class="t" style="left:1411px;top:553px;color:#333">复制基准平面</div>
<div class="t" style="left:1411px;top:575px;color:#333">复制面组</div>
<div class="abs" style="left:1381px;top:608px;width:335px;height:1px;background:#b9b9b9"></div>
<div class="abs" style="left:1391px;top:619px;width:59px;height:25px;background:#f8f8f8;border:1px solid #9e9e9e"></div>
<div class="t" style="left:1400px;top:625px;color:#222">预览(<u>P</u>)</div>
<div class="abs" style="left:1610px;top:619px;width:44px;height:25px;background:#a8ddf7;border:1px solid #6cc1ea"></div>
<div class="t" style="left:1620px;top:625px;color:#222">确定</div>
<div class="abs" style="left:1662px;top:619px;width:44px;height:25px;background:#f8f8f8;border:1px solid #9e9e9e"></div>
<div class="t" style="left:1672px;top:625px;color:#222">取消</div>
<!-- watermark -->
<svg class="abs" style="left:0;top:0" width="1752" height="701">
  <g transform="translate(1560,610)" fill="none" stroke="#f26434" stroke-width="1.7" stroke-linecap="round" stroke-linejoin="round">
    <path d="M14,32.5 L28,32.5 L26,46 L12,46 Z M21,32.5 L17,61 M13,39 L27,39 M10,53 L25,53 M6.5,60 L26,58.5"/>
    <path d="M30,32.5 L46,32.5 L37.5,40 M31.5,38 L36,42 M28,45 L44,45 L40.5,52 M37,45 L34,62.5 Q33.5,63.5 26,63"/>
    <path d="M56,36 L62,47 M72,30 Q71,44 68,50 Q60,58 49,63 M69.5,49 Q76,57 83,63"/>
  </g>
  <path d="M1635,616 C1648,626 1652,640 1645,651 Q1641,657 1635,659 Q1643,646 1641,634 Q1639,624 1635,616Z" fill="#f0622e"/>
  <g transform="translate(1645,625)" fill="none" stroke="#111" stroke-width="2" stroke-linecap="round" stroke-linejoin="round">
    <path d="M14.5,15.5 L18,21 M9,27 L15,27 L11,47 L20,39"/>
    <path d="M35,14 L22,30 M35,14 L45,29 M38.5,30 L28.5,35 Q26,37 26,43 Q26,46.5 30,46.5 L38,46.5 Q40,46.5 40,43 L40,38"/>
    <path d="M52,24 L63,24 M61,14 L56,41 M49,43 L64,37"/>
    <path d="M67,18 L87,18 M63,28.5 L88,28.5 M75,30 L62,45 L82,43 M76,35 L83,47"/>
  </g>
</svg>
<div class="t" style="left:1569px;top:675px;font-size:14px;line-height:18px;color:#9c9c9c;font-style:italic;transform:scaleX(1.29);transform-origin:0 0">www.proewildfire.cn</div>
</body></html>
